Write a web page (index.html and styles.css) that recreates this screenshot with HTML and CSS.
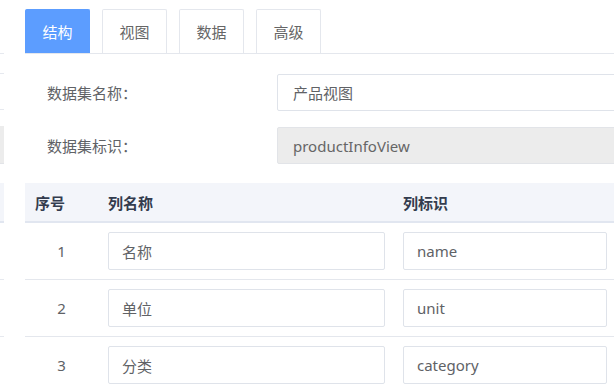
FILE: index.html
```html
<!DOCTYPE html>
<html lang="zh">
<head>
<meta charset="utf-8">
<title>数据集</title>
<link rel="stylesheet" href="styles.css">
</head>
<body>
<div class="page">
  <div class="side">
    <div class="s-line s1"></div>
    <div class="s-line s2"></div>
    <div class="s-line s3"></div>
    <div class="s-box"></div>
    <div class="s-head"></div>
    <div class="s-line s4"></div>
    <div class="s-line s5"></div>
  </div>
  <div class="main">
    <div class="tabs">
      <div class="tab active">结构</div>
      <div class="tab">视图</div>
      <div class="tab">数据</div>
      <div class="tab">高级</div>
    </div>
    <div class="form">
      <div class="form-row">
        <label class="label">数据集名称：</label>
        <div class="input">产品视图</div>
      </div>
      <div class="form-row">
        <label class="label">数据集标识：</label>
        <div class="input disabled">productInfoView</div>
      </div>
    </div>
    <div class="table">
      <div class="thead">
        <div class="th">序号</div>
        <div class="th">列名称</div>
        <div class="th">列标识</div>
      </div>
      <div class="tr">
        <div class="td num">1</div>
        <div class="td name"><div class="cell-input">名称</div></div>
        <div class="td"><div class="cell-input">name</div></div>
      </div>
      <div class="tr">
        <div class="td num">2</div>
        <div class="td name"><div class="cell-input">单位</div></div>
        <div class="td"><div class="cell-input">unit</div></div>
      </div>
      <div class="tr">
        <div class="td num">3</div>
        <div class="td name"><div class="cell-input">分类</div></div>
        <div class="td"><div class="cell-input">category</div></div>
      </div>
    </div>
  </div>
</div>
</body>
</html>
```
FILE: styles.css
```css
* { box-sizing: border-box; }
html, body {
  margin: 0;
  padding: 0;
  background: #fff;
  overflow: hidden;
  width: 614px;
  height: 392px;
}
body {
  font-family: "Noto Sans", "Noto Sans CJK SC", sans-serif;
  font-size: 15px;
  color: #606266;
}
.page {
  display: flex;
  align-items: flex-start;
}
.side {
  width: 4px;
  flex: none;
  display: flex;
  flex-direction: column;
}
.s-line { height: 1px; background: #e6e9ef; }
.s1 { margin-top: 53px; }
.s2 { margin-top: 19px; }
.s3 { margin-top: 35px; }
.s-box {
  margin-top: 16px;
  height: 38px;
  background: #ececec;
  border-bottom: 1px solid #e2e4e8;
}
.s-head {
  margin-top: 19px;
  height: 40px;
  background: #f3f5fa;
  border-bottom: 2px solid #e1e6f0;
}
.s4 { margin-top: 56px; }
.s5 { margin-top: 56px; }

.main {
  margin-left: 21px;
  width: 600px;
  flex: none;
}
.tabs {
  display: flex;
  gap: 12px;
  padding-top: 9px;
  border-bottom: 1px solid #e4e7ed;
}
.tab {
  width: 65px;
  height: 44px;
  border: 1px solid #e4e7ed;
  border-bottom: none;
  border-radius: 2px 2px 0 0;
  display: flex;
  align-items: center;
  justify-content: center;
  color: #666;
  background: #fff;
}
.tab.active {
  background: #5c9dff;
  border-color: #5c9dff;
  color: #fff;
}
.form {
  padding: 20px 0 0 22px;
  display: flex;
  flex-direction: column;
  gap: 16px;
}
.form-row {
  display: flex;
  align-items: center;
}
.label {
  width: 230px;
  flex: none;
  color: #606266;
}
.input {
  width: 360px;
  height: 37px;
  flex: none;
  border: 1px solid #dfe3ea;
  border-radius: 2px;
  padding: 0 15px;
  display: flex;
  align-items: center;
  color: #606266;
  background: #fff;
}
.input.disabled {
  background: #ececec;
  border-color: #e2e4e8;
  color: #666;
}
.table {
  margin-top: 19px;
  width: 600px;
}
.thead, .tr {
  display: grid;
  grid-template-columns: 73px 295px 224px 8px;
}
.thead {
  height: 40px;
  background: #f3f5fa;
  border-bottom: 2px solid #e1e6f0;
  align-items: center;
}
.th {
  padding: 0 10px;
  font-weight: bold;
  color: #333c4e;
}
.tr {
  height: 57px;
  border-bottom: 1px solid #e4e7ed;
  align-items: center;
}
.td {
  padding: 0 10px;
}
.td.name {
  padding: 0 8px 0 10px;
}
.td.num {
  text-align: center;
  padding: 0;
}
.cell-input {
  height: 38px;
  border: 1px solid #dfe3ea;
  border-radius: 2px;
  padding: 0 13px;
  display: flex;
  align-items: center;
  color: #606266;
  background: #fff;
}
```
